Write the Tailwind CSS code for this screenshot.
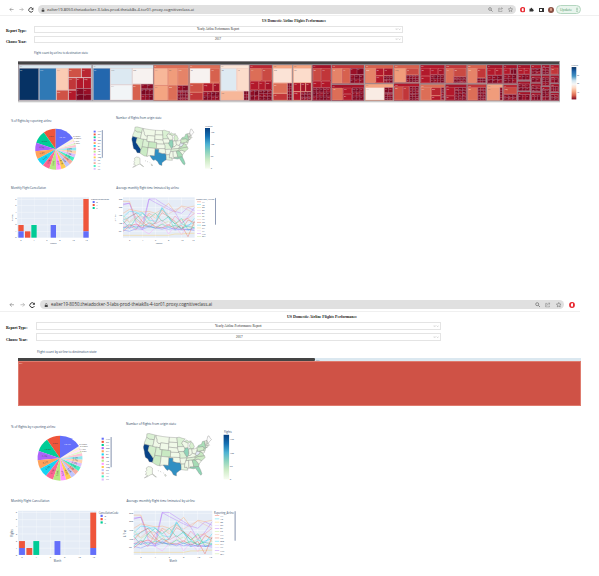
<!DOCTYPE html>
<html lang="en">
<head>
<meta charset="utf-8">
<title>US Domestic Airline Flights Performance</title>
<script src="https://cdn.jsdelivr.net/npm/@tailwindcss/browser@4"></script>
</head>
<body class="bg-white w-[599px] h-[576px] overflow-hidden font-['Open_Sans',sans-serif] text-[#2a3f5f]">
<svg class="absolute w-0 h-0">
  <symbol id="back" viewBox="0 0 12 12"><path d="M11 6H2M6 2L2 6l4 4" fill="none" stroke="#777" stroke-width="1.3"/></symbol>
  <symbol id="fwd" viewBox="0 0 12 12"><path d="M1 6h9M6 2l4 4-4 4" fill="none" stroke="#999" stroke-width="1.3"/></symbol>
  <symbol id="reload" viewBox="0 0 12 12"><path d="M10 7.5A4.4 4.4 0 1 1 9.300 3" fill="none" stroke="#333" stroke-width="1.8"/><path d="M10.800 .8v4.500H6.300z" fill="#333"/></symbol>
  <symbol id="lock" viewBox="0 0 12 12"><rect x="2" y="5" width="8" height="6.500" rx="1" fill="#444"/><path d="M3.800 5V3.500a2.200 2.200 0 0 1 4.400 0V5" fill="none" stroke="#444" stroke-width="1.400"/></symbol>
  <symbol id="search" viewBox="0 0 12 12"><circle cx="4.800" cy="4.800" r="3.300" fill="none" stroke="#666" stroke-width="1.400"/><path d="M7.300 7.300L11 11" stroke="#666" stroke-width="1.600"/></symbol>
  <symbol id="share" viewBox="0 0 12 12"><path d="M5 3H1.500v8h8V8M4 8c.3-3 2-4.500 6-4.500M8 1l3 2.500L8 6" fill="none" stroke="#777" stroke-width="1.100"/></symbol>
  <symbol id="star" viewBox="0 0 12 12"><path d="M6 1l1.500 3.400 3.700.4-2.800 2.500.8 3.700L6 9.100 2.800 11l.8-3.700L.8 4.800l3.700-.4z" fill="none" stroke="#666" stroke-width="1.100"/></symbol>
  <symbol id="stop" viewBox="0 0 12 12"><circle cx="6" cy="6" r="5.800" fill="#e8252d"/><path d="M4 3.500h1v-1h1v-.5h1v1h1V8L7 9.500H5L3.700 7z" fill="#fff"/></symbol>
  <symbol id="puzzle" viewBox="0 0 12 12"><path d="M1 4h3a1.700 1.700 0 1 1 3.300 0H10v2.500a1.500 1.500 0 1 1 0 3V11H1V8.500a1.500 1.500 0 0 0 0-2.500z" fill="#333"/></symbol>
</svg>

<section class="h-[292px] flex flex-col">
  <div class="h-[16px] pt-[4.500px] flex items-center border-b border-[#f0f0f0]">
    <svg class="ml-[8.500px] w-[5px] h-[5px]"><use href="#back"/></svg>
    <svg class="ml-[5px] w-[5px] h-[5px]"><use href="#fwd"/></svg>
    <svg class="ml-[4px] w-[6px] h-[6px]"><use href="#reload"/></svg>
    <div class="ml-[4px] w-[478px] h-[9px] rounded-full bg-[#e0e0e0] flex items-center">
      <svg class="ml-[3px] w-[4px] h-[4px]"><use href="#lock"/></svg>
      <svg class="ml-[2.500px] w-[147px] h-[5px] overflow-visible" fill="#333"><text y="3.900" font-size="4.200" textLength="147" lengthAdjust="spacingAndGlyphs">ealter19-8050.theiadocker-3-labs-prod-theiak8s-4-tor01.proxy.cognitiveclass.ai</text></svg>
      <svg class="ml-auto w-[5px] h-[5px]"><use href="#search"/></svg>
      <svg class="ml-[5px] w-[5px] h-[5px]"><use href="#share"/></svg>
      <svg class="ml-[4.500px] mr-[3px] w-[5px] h-[5px]"><use href="#star"/></svg>
    </div>
    <svg class="ml-[4px] w-[5.500px] h-[5.500px]"><use href="#stop"/></svg>
    <svg class="ml-[4px] w-[5px] h-[5px]"><use href="#puzzle"/></svg>
    <div class="ml-[5px] w-[4.500px] h-[4.500px] border border-r-2 border-[#333]"></div>
    <div class="ml-[4.500px] w-[5.500px] h-[6px] rounded-full bg-[#8a5144] flex justify-center items-center"><div class="w-[2.500px] h-[3px] rounded-full bg-[#dfa28d]"></div></div>
    <div class="ml-[2px] w-[25px] h-[9px] rounded-full border border-[#b4d6c0] bg-[#e9f5ed] flex items-center">
      <svg class="ml-[3px] w-[20px] h-[5px] overflow-visible" fill="#4e9567"><text y="4" font-size="4" textLength="12" lengthAdjust="spacingAndGlyphs">Update</text><path d="M17 .8v.9M17 2.300v.9M17 3.800v.9" stroke="#4e9567" stroke-width=".9"/></svg>
    </div>
  </div>
  <h1 class="mt-[2px] h-[5px] flex items-center pl-[262px] font-['Liberation_Serif',serif] font-bold"><svg class="w-[64px] h-[5px] overflow-visible" fill="#222"><text y="3.800" font-size="4.300" textLength="64" lengthAdjust="spacingAndGlyphs">US Domestic Airline Flights Performance</text></svg></h1>
  <div class="mt-[2.500px] h-[7px] flex items-center font-['Liberation_Serif',serif]">
    <div class="w-[34px] pl-[5.500px] font-bold shrink-0"><svg class="w-[21px] h-[5px] overflow-visible" fill="#000"><text y="5" font-size="4.600" textLength="20.500" lengthAdjust="spacingAndGlyphs">Report Type:</text></svg></div>
    <div class="w-[369px] h-[7px] border border-[#e4e4e4] flex items-center"><svg class="ml-[162px] w-[42px] h-[4px] overflow-visible" fill="#222"><text y="2.900" font-size="3.400" textLength="42" lengthAdjust="spacingAndGlyphs">Yearly Airline Performance Report</text></svg><svg class="ml-auto mr-[1px] w-[6px] h-[4px]"><path d="M1 1.500l1.200 1.200M2.200 1.500l-1.200 1.200M3.700 1.600l1 1 1-1" fill="none" stroke="#aaa" stroke-width=".5"/></svg></div>
  </div>
  <div class="mt-[3px] h-[7px] flex items-center font-['Liberation_Serif',serif]">
    <div class="w-[34px] pl-[5.500px] font-bold shrink-0"><svg class="w-[21px] h-[5px] overflow-visible" fill="#000"><text y="5.500" font-size="4.600" textLength="20.500" lengthAdjust="spacingAndGlyphs">Choose Year:</text></svg></div>
    <div class="w-[369px] h-[7px] border border-[#e4e4e4] flex items-center"><svg class="ml-[180px] w-[6px] h-[4px] overflow-visible" fill="#222"><text y="2.900" font-size="3.400" textLength="6" lengthAdjust="spacingAndGlyphs">2017</text></svg><svg class="ml-auto mr-[1px] w-[6px] h-[4px]"><path d="M1 1.500l1.200 1.200M2.200 1.500l-1.200 1.200M3.700 1.600l1 1 1-1" fill="none" stroke="#aaa" stroke-width=".5"/></svg></div>
  </div>
  <div class="mt-[7.500px] h-[5px] pl-[34px] flex items-center"><svg class="w-[54px] h-[5px] overflow-visible" fill="#2a3f5f"><text y="3.600" font-size="3.100" textLength="54" lengthAdjust="spacingAndGlyphs">Flight count by airline to destination state</text></svg></div>
  <div class="mt-[6px] ml-[18px] h-[49px] flex">
    <svg id="tree" class="w-[542px] h-[42px] shrink-0" viewBox="54 15 1626 126"></svg>
    <svg class="w-[30px] h-[42px] ml-[11px]" viewBox="0 0 90 126">
      <defs><linearGradient id="rdbu" x1="0" y1="0" x2="0" y2="1"><stop offset="0" stop-color="#053061"/><stop offset=".13" stop-color="#2166ac"/><stop offset=".28" stop-color="#4393c3"/><stop offset=".42" stop-color="#d1e5f0"/><stop offset=".53" stop-color="#f7f7f7"/><stop offset=".64" stop-color="#fddbc7"/><stop offset=".76" stop-color="#f4a582"/><stop offset=".88" stop-color="#d6604d"/><stop offset="1" stop-color="#7d0923"/></linearGradient></defs>
      <rect x="2" y="15" width="15" height="104" fill="url(#rdbu)"/>
      <g font-size="7" fill="#2a3f5f"><text x="2" y="11" textLength="21" lengthAdjust="spacingAndGlyphs">Flights</text><text x="19" y="43" font-size="6">30</text><text x="19" y="70" font-size="6">20</text><text x="19" y="97" font-size="6">10</text></g>
    </svg>
  </div>
  <svg data-charts class="w-[230px] h-[145px]" viewBox="0 330 690 435"></svg>
</section>

<section class="h-[284px] flex flex-col">
  <div class="w-[580px] h-[20px] pt-[6.500px] flex items-center border-b border-[#f0f0f0] overflow-hidden">
    <svg class="ml-[8.500px] w-[5.500px] h-[5.500px] shrink-0"><use href="#back"/></svg>
    <svg class="ml-[5.500px] w-[5.500px] h-[5.500px] shrink-0"><use href="#fwd"/></svg>
    <svg class="ml-[4px] w-[6.500px] h-[6.500px] shrink-0"><use href="#reload"/></svg>
    <div class="ml-[4.500px] w-[524px] h-[9px] rounded-full bg-[#e0e0e0] flex items-center shrink-0">
      <svg class="ml-[3.500px] w-[4.500px] h-[4.500px]"><use href="#lock"/></svg>
      <svg class="ml-[3px] w-[161px] h-[5px] overflow-visible" fill="#333"><text y="4.100" font-size="4.600" textLength="161" lengthAdjust="spacingAndGlyphs">ealter19-8050.theiadocker-3-labs-prod-theiak8s-4-tor01.proxy.cognitiveclass.ai</text></svg>
      <svg class="ml-auto w-[5.500px] h-[5.500px]"><use href="#search"/></svg>
      <svg class="ml-[5px] w-[5.500px] h-[5.500px]"><use href="#share"/></svg>
      <svg class="ml-[5px] mr-[3px] w-[5.500px] h-[5.500px]"><use href="#star"/></svg>
    </div>
    <svg class="ml-[4.500px] w-[6px] h-[6px] shrink-0"><use href="#stop"/></svg>
    <svg class="ml-[5px] w-[5px] h-[5px] shrink-0"><use href="#puzzle"/></svg>
  </div>
  <h1 class="mt-[2px] h-[5px] flex items-center pl-[286.500px] font-['Liberation_Serif',serif] font-bold"><svg class="w-[70px] h-[5px] overflow-visible" fill="#222"><text y="3.800" font-size="4.600" textLength="70" lengthAdjust="spacingAndGlyphs">US Domestic Airline Flights Performance</text></svg></h1>
  <div class="mt-[3px] h-[8px] flex items-center font-['Liberation_Serif',serif]">
    <div class="w-[36px] pl-[5.500px] font-bold shrink-0"><svg class="w-[21px] h-[5px] overflow-visible" fill="#000"><text y="5.200" font-size="4.900" textLength="21.500" lengthAdjust="spacingAndGlyphs">Report Type:</text></svg></div>
    <div class="w-[405px] h-[8px] border border-[#e4e4e4] flex items-center"><svg class="ml-[178px] w-[46.500px] h-[4px] overflow-visible" fill="#222"><text y="2.900" font-size="3.700" textLength="46.500" lengthAdjust="spacingAndGlyphs">Yearly Airline Performance Report</text></svg><svg class="ml-auto mr-[1px] w-[6px] h-[4px]"><path d="M1 1.500l1.200 1.200M2.200 1.500l-1.200 1.200M3.700 1.600l1 1 1-1" fill="none" stroke="#aaa" stroke-width=".5"/></svg></div>
  </div>
  <div class="mt-[3px] h-[8px] flex items-center font-['Liberation_Serif',serif]">
    <div class="w-[36px] pl-[5.500px] font-bold shrink-0"><svg class="w-[21px] h-[5px] overflow-visible" fill="#000"><text y="5.500" font-size="4.900" textLength="21.500" lengthAdjust="spacingAndGlyphs">Choose Year:</text></svg></div>
    <div class="w-[405px] h-[8px] border border-[#e4e4e4] flex items-center"><svg class="ml-[198.500px] w-[6.500px] h-[4px] overflow-visible" fill="#222"><text y="2.900" font-size="3.700" textLength="6.500" lengthAdjust="spacingAndGlyphs">2017</text></svg><svg class="ml-auto mr-[1px] w-[6px] h-[4px]"><path d="M1 1.500l1.200 1.200M2.200 1.500l-1.200 1.200M3.700 1.600l1 1 1-1" fill="none" stroke="#aaa" stroke-width=".5"/></svg></div>
  </div>
  <div class="mt-[8px] h-[5px] pl-[36.500px] flex items-center"><svg class="w-[59.500px] h-[5px] overflow-visible" fill="#2a3f5f"><text y="3.600" font-size="3.400" textLength="59.500" lengthAdjust="spacingAndGlyphs">Flight count by airline to destination state</text></svg></div>
  <div class="mt-[4px] ml-[18px] w-[562.500px] h-[48px]">
    <div class="h-[3px] bg-[#dbe8f0] flex items-center"><div class="w-[297px] h-[3px] bg-[#444] rounded-r-[1px]"></div><svg class="ml-px w-[4px] h-[3px]"><text y="2.500" font-size="2.500" fill="#789">GU</text></svg></div>
    <div class="h-[45px] bg-[#cf5246] border border-[#df7b6e]"><svg class="w-[6px] h-[4px]"><text x=".3" y="2.200" font-size="2.300" fill="#fff">UA</text></svg></div>
  </div>
  <svg data-charts class="mt-[9px] w-[252px] h-[159px] -ml-px shrink-0" viewBox="0 330 690 435"></svg>
</section>

<script>
const rect = (x, y, w, h, f, extra = '') => `<rect x="${x}" y="${y}" width="${w}" height="${h}" fill="${f}" ${extra}/>`;
const text = (x, y, s, size, len, extra = '') => `<text x="${x}" y="${y}" font-size="${size}" ${len ? `textLength="${len}" lengthAdjust="spacingAndGlyphs"` : ''} ${extra}>${s}</text>`;

// ---- treemap ----
const codes = ['AA','DL','WN','UA','OO','B6','AS','NK','EV','MQ','F9','YX','9E','OH'];
const darks = ['#8f0c25','#840a24','#7a0722','#990f27','#800923'];
// g: [x0,y0,x1,y1,header,label,cells]; cell: [x0,y0,x1,y1,colour] or [x0,y0,x1,y1,cols,rows]
const A='#b2182b',B='#c13639',C='#cf5246',D='#dc6e57',E='#e58368',F='#f09c7b',K='#a51429';
const sh = (o, c) => c.map(v => [v[0]+o, v[1], v[2]+o, ...v.slice(3)]);
const G = [
 [57,27,275,134,'#dbe8f0','CA',sh(30,[[28,37,86,132,'#063264'],[88,37,138,132,'#2f79b5'],[140,37,174,102,'#fbccb4'],[140,103,174,132,C],[176,37,213,64,C],[215,37,243,64,'#b92732'],[176,66,198,101,B],[199,66,220,98,A],[221,66,243,98,A],[176,103,198,132,A],[199,98,243,132,2,2]])],
 [278,27,460,134,'#dbe8f0','TX',sh(30,[[250,37,300,132,'#2367ae'],[302,37,366,85,'#dce9f2'],[302,87,366,132,'#f2f5f7'],[368,37,429,83,'#f7f2f0'],[368,85,392,132,'#d7614e'],[394,85,429,98,2,1],[394,100,429,132,3,2]])],
 [461,27,566,134,D,'IL',sh(30,[[433,37,473,87,'#f7b799'],[475,37,502,87,F],[504,37,534,87,E],[433,89,473,132,'#f4a582'],[475,89,501,132,D],[503,89,534,104,2,1],[503,106,534,132,4,3]])],
 [568,27,660,134,D,'FL',[[570,37,630,81,'#f7f2f0'],[632,37,658,78,'#d7614e'],[570,83,608,108,C],[570,110,608,132,B],[610,82,638,106,A],[640,82,658,106,K],[610,108,658,132,4,2]]],
 [661,27,747,134,'#fbe5d8','GA',sh(615,[[48,37,94,104,'#deeaf2'],[96,37,130,104,'#fcdccb'],[48,106,115,132,'#f7b799'],[117,106,130,132,2,3]])],
 [749,27,816,134,'#b92732','NY',sh(615,[[136,37,170,74,D],[172,37,200,74,'#c94a43'],[136,76,160,101,A],[162,76,180,101,A],[182,76,200,101,K],[136,103,160,132,2,2],[162,103,200,132,3,3]])],
 [818,27,877,134,'#f4a582','CO',sh(615,[[205,37,260,80,'#fbe3d6'],[205,82,246,111,D],[205,113,246,132,B],[248,82,260,132,2,6]])],
 [879,27,935,134,'#f4a582','NC',sh(615,[[266,37,318,79,'#fcdccb'],[266,81,286,106,A],[288,81,301,106,K],[303,81,318,106,K],[266,108,286,132,A],[288,108,318,132,3,3]])],
 [937,27,993,134,K,'VA',sh(615,[[324,37,348,74,'#c94a43'],[350,37,376,74,B],[324,76,348,94,A],[350,76,376,94,A],[324,96,376,132,5,3]])],
 [995,27,1092,83,B,'AZ',sh(615,[[382,37,411,81,E],[413,37,434,81,'#d7614e'],[436,37,476,55,2,1],[436,57,476,81,3,2]])],
 [995,86,1092,134,K,'PA',sh(615,[[382,96,413,132,D],[415,96,440,113,A],[415,115,440,132,A],[442,96,476,132,3,3]])],
 [1095,27,1180,82,'#d7614e','MI',sh(615,[[482,37,511,80,E],[513,37,535,58,A],[537,37,563,58,K],[513,60,535,80,A],[537,60,563,80,3,2]])],
 [1095,84,1180,134,'#f4a582','NV',sh(615,[[482,95,537,132,'#f9ece4'],[539,95,563,110,2,1],[539,112,563,132,3,2]])],
 [1182,27,1258,80,'#d7614e','WA',[[1184,37,1217,78,F],[1219,37,1256,56,'#c94a43'],[1219,58,1256,78,4,2]]],
 [1182,82,1258,134,A,'MN',[[1184,92,1207,132,C],[1209,92,1227,132,B],[1229,92,1256,132,3,4]]],
 [1261,27,1334,82,A,'OH',sh(1200,[[63,37,90,59,A],[92,37,113,55,A],[115,37,132,55,K],[63,61,90,80,A],[92,57,132,80,4,2]])],
 [1261,85,1334,134,D,'MA',sh(1200,[[63,95,92,132,D],[94,95,122,118,'#b92732'],[94,120,122,132,A],[124,95,132,132,1,5]])],
 [1336,27,1400,82,B,'MO',sh(1200,[[138,37,160,80,D],[162,37,198,61,'#c94a43'],[162,63,198,80,4,2]])],
 [1336,85,1400,134,K,'TN',sh(1200,[[138,95,163,118,A],[138,120,163,132,K],[165,95,198,132,3,4]])],
 [1402,27,1459,82,'#d7614e','OR',sh(1200,[[204,37,230,80,E],[232,37,257,65,B],[232,67,257,80,3,2]])],
 [1402,85,1459,134,B,'MD',sh(1200,[[204,95,232,132,D],[234,95,257,132,3,4]])],
 [1461,27,1508,83,K,'LA',sh(1200,[[263,37,284,57,A],[286,37,306,57,A],[263,59,306,81,3,2]])],
 [1461,85,1508,134,'#f4a582','UT',sh(1200,[[263,95,298,132,F],[300,95,307,132,1,5]])],
 [1510,27,1551,83,K,'NJ',sh(1200,[[312,37,330,54,A],[332,37,349,54,2,1],[312,56,349,81,3,2]])],
 [1510,86,1551,134,'#b92732','HI',sh(1200,[[312,95,349,114,'#c94a43'],[312,116,349,132,3,2]])],
 [1553,27,1591,73,K,'WI',sh(1200,[[355,37,372,54,A],[374,37,389,54,A],[355,56,389,71,3,1]])],
 [1553,76,1591,106,K,'KY',sh(1200,[[355,84,389,104,3,2]])],[1553,108,1591,134,K,'IN',sh(1200,[[355,116,389,132,3,1]])],
 [1593,27,1623,56,A,'SC',sh(1200,[[395,37,421,54,2,2]])],[1593,58,1623,80,K,'OK',sh(1200,[[395,66,421,78,2,1]])],[1593,82,1623,107,K,'AL',sh(1200,[[395,90,421,105,2,2]])],[1593,109,1623,134,K,'NE',sh(1200,[[395,117,421,132,3,1]])],
 [1625,27,1649,56,K,'AR',sh(1200,[[427,35,447,54,2,2]])],[1625,58,1649,90,K,'IA',sh(1200,[[427,66,447,88,2,2]])],[1625,92,1649,134,K,'ID',sh(1200,[[427,100,447,132,2,3]])],
 [1651,27,1677,56,A,'AK',sh(1200,[[453,36,474,54,B]])],[1651,58,1677,82,K,'NM',sh(1200,[[453,66,474,80,2,1]])],[1651,84,1677,108,K,'MT',sh(1200,[[453,92,474,106,3,2]])],[1651,110,1677,134,K,'ND',sh(1200,[[453,116,474,132,2,2]])]
];
let t = rect(54,15,1626,122,'#a9a3a8') + rect(54,17,1623,8,'#454545') + rect(54,136,1626,3,'#c9c9c9'), n = 0;
for (const g of G) {
  t += rect(g[0], g[1], g[2]-g[0], g[3]-g[1], g[4], 'stroke="#8d7f87" stroke-width="1"');
  t += text(g[0]+3, g[1]+7, g[5], 5, 0, `fill="${/^#(db|f)/.test(g[4]) ? '#765' : '#fff'}" opacity=".8"`);
  for (const c of g[6]) {
    const [x,y,X,Y,p,q] = c;
    if (q) {
      t += rect(x-1, y-1, X-x+2, Y-y+2, '#b07686');
      const w = (X-x)/p, h = (Y-y)/q;
      for (let i=0;i<p;i++) for (let j=0;j<q;j++) { n++; t += rect(x+i*w+.6, y+j*h+.6, w-1.2, h-1.2, darks[n%5]) + (w>7&&h>7 ? text(x+i*w+1.5, y+j*h+6, codes[n%14], 4, 0, 'fill="#fff" opacity=".6"') : ''); }
    } else {
      n++;
      t += rect(x, y, X-x, Y-y, p, 'stroke="#e8b0a8" stroke-width="1" stroke-opacity=".7"') + text(x+2, y+7, codes[n%14], 5.5, 0, `fill="${/^#(f|de|dce)/.test(p) ? '#655' : '#fff'}" opacity=".85"`);
    }
  }
}
document.getElementById('tree').innerHTML = t;

// ---- charts ----
// state borders as west longitude, latitude
const S = {
WA:'124.7,48.4 122.8,49 117,49 117,46 119,46 121,45.7 123.2,46.2 124,46.3',
OR:'124,46.3 123.2,46.2 121,45.7 119,46 117,46 117,44.2 117,42 124.2,42 124.5,43',
CA:'124.2,42 120,42 120,39 114.6,35 114.7,32.7 117.1,32.5 118.5,34 120.6,34.6 122,36.8 122.5,37.8 123.8,39.5 124.3,40.4',
NV:'120,42 114,42 114,36.2 114.6,35 120,39',
ID:'117,49 116,49 116,48 114.5,46.5 114.3,45.5 113,44.5 111,44.5 111,42 117,42 117,46',
MT:'116,49 110,49 104,49 104,45 111,45 111,44.5 113,44.5 114.3,45.5 114.5,46.5 116,48',
WY:'111,45 104,45 104,41 111,41', UT:'114,42 111,42 111,41 109,41 109,37 114,37', CO:'109,41 102,41 102,37 109,37',
AZ:'114,37 109,37 109,31.3 111,31.3 114.7,32.5 114.6,35 114,36.2',
NM:'109,37 103,37 103,32 106.6,32 106.6,31.8 108.2,31.8 108.2,31.3 109,31.3',
ND:'104,49 97.2,49 96.6,46 104,46', SD:'104,46 96.6,46 96.4,43 98,42.8 104,43',
NE:'104,43 98,42.8 96.4,42.5 95.8,41 95.3,40 102,40 102,41 104,41', KS:'102,40 95.3,40 94.6,39 94.6,37 102,37',
OK:'103,37 94.6,37 94.4,35.5 94.5,33.7 97,33.8 100,34.5 100,36.5 103,36.5',
TX:'103,36.5 100,36.5 100,34.5 97,33.8 94.5,33.7 94,33 93.8,31 93.9,29.7 95,29.2 97.2,27.7 97.2,25.9 99.2,26.5 100.5,28.5 102.5,29.7 103.2,29 104.5,29.6 106.6,31.8 106.6,32 103,32',
MN:'97.2,49 95.2,49.3 92,48.5 89.6,48 92,46.7 92.8,45.5 91.2,43.5 96.5,43.5 96.6,46',
IA:'96.5,43.5 91.2,43.5 90.2,42 91.2,40.6 95.8,40.6 96.4,42.5',
MO:'95.8,40.6 91.5,40.5 90.5,38.8 89.2,37 89.7,36 90.3,36.5 94.6,36.5 94.6,39',
AR:'94.6,36.5 90.3,36.5 89.7,36 91.2,33 94,33 94.4,35.5',
LA:'94,33 91.2,33 91.5,31 89.7,31 89.2,29.2 91,29.3 93.9,29.7 93.8,31',
WI:'92,46.7 90.5,46.6 88,45.8 87.5,44.8 87.8,42.5 90.6,42.5 91.2,43.5 92.8,45.5',
IL:'90.6,42.5 87.8,42.5 87.5,41.7 87.5,39.3 88.1,37.8 89.2,37 90.5,38.8 91.5,40.5 90.2,42',
MI:'86.8,41.8 84.8,41.7 83.4,41.8 82.5,43 83,44 83.4,45.2 84.8,45.8 85.6,45 86.5,43.8 86.2,42.5',
UP:'90.5,46.6 88.4,47.3 87,46.5 84.5,46.5 84.8,46 87.5,45.3 88,45.8',
IN:'87.5,41.7 84.8,41.7 84.8,39.1 86.3,38 88.1,37.8 87.5,39.3',
OH:'84.8,41.7 83,41.5 80.5,42 80.5,40.6 82,38.6 83.5,38.6 84.8,39.1',
KY:'89.2,37 88.1,37.8 86.3,38 84.8,39.1 83.5,38.6 82.5,38.2 82,37.5 83.6,36.6 89.3,36.5',
TN:'89.3,36.5 83.6,36.6 81.7,36.6 84.3,35 90.2,35', MS:'90.2,35 88.2,35 88.4,30.3 89.7,30.3 89.7,31 91.5,31 91.2,33',
AL:'88.2,35 85.6,35 85,32.5 85,31 87.6,31 87.5,30.3 88.4,30.3', GA:'85.6,35 83.1,35 81,32 81.4,30.7 84.9,30.7 85,32.5',
FL:'87.6,31 84.9,30.7 81.4,30.7 80.5,28.2 80.1,26 80.8,25.2 81.8,26.2 82.7,28 83.8,29.9 85.3,29.7 87.5,30.3',
SC:'83.1,35 81,35.1 78.6,33.9 81,32', NC:'84.3,35 81.7,36.6 76,36.5 75.6,35.3 77.5,34.4 78.6,33.9 81,35.1 83.1,35',
VA:'83.6,36.6 82,37.5 80.3,37.6 78.3,39.3 77,38.5 76.3,37 76,36.5', WV:'82.5,38.2 80.6,40.6 80.5,39.7 78.3,39.4 80.3,37.6 82,37.5',
MD:'79.5,39.7 75.6,39.8 75.1,38.5 76,38 77,38.5 78.3,39.4', PA:'80.5,42 79.8,42.3 75.3,42 74.8,40.5 75.6,39.8 80.5,39.7',
NJ:'75,41.3 74,40.9 74.2,39.6 75,39 75.6,39.8 74.8,40.5',
NY:'79.8,42.3 79,43.2 76.3,43.5 75,45 73.3,45 73.4,41 72,41 74.2,40.6 75.3,42',
VT:'73.3,45 71.5,45 72.5,42.7 73.3,42.7', NH:'71.5,45 71,45.2 70.7,43 72.5,42.7',
ME:'71,45.2 70.2,46.3 69.2,47.4 68.2,47.3 67.8,45.7 67,44.8 69,44 70.7,43', MA:'73.3,42.7 70.7,42.9 70,41.8 73.5,42.05', CT:'73.5,42.05 71.2,42 71.2,41.4 73.5,41.1'
};
const tone = {CA:'#084387',TX:'#2f8fc3',IL:'#8fd3b8',FL:'#8fd5b5',GA:'#a6dcb5',NY:'#aadfb8',CO:'#c8e9c2',AZ:'#cbebc5',NV:'#d3eecc',WA:'#dbf1d4',MN:'#daf1d3',MI:'#d8f0d0',UP:'#d8f0d0',VA:'#c8e9c2',NC:'#cdebc5',NJ:'#cdebc5',PA:'#d0edc9',UT:'#daf1d3',OR:'#e2f4dc',MO:'#def2d7',TN:'#def2d7',LA:'#e5f5df',WV:'#e4ebf6',ME:'#fbfbfb'};
// Albers equal-area conic
const R = Math.PI/180, p1 = 29.5*R, p2 = 45.5*R, nn = (Math.sin(p1)+Math.sin(p2))/2, cc = Math.cos(p1)**2 + 2*nn*Math.sin(p1);
const rho = l => Math.sqrt(cc - 2*nn*Math.sin(l*R))/nn;
const proj = s => s.split(' ').map(q => { const [lo,la] = q.split(',').map(Number), th = nn*(96-lo)*R, r = rho(la); return (490.6+259*r*Math.sin(th)).toFixed(1)+','+(444-259*(rho(37.5)-r*Math.cos(th))).toFixed(1); }).join(' ');
let m = '<g stroke="#777" stroke-width=".9" stroke-linejoin="round">';
for (const k in S) m += `<polygon points="${proj(S[k])}" fill="${tone[k]||'#f0f9e8'}"/>`;
m += '<path d="M403 475l6-4 7 1 4 3v16l6 4 5 5-5-2-6-6-6 2-8 5-8 3 9-6-6-3 3-5-3-3 4-4z" fill="#f0f9e8"/><path d="M435 482l3 1M441 484l3 2M449 488l2 1M454 492l4 3-2 3-2-3z" fill="#f0f9e8"/></g>';

const pie = [['#EF553B',9.8],['#00cc96',10],['#ab63fa',6.700],['#FFA15A',6.300],['#19d3f3',6.500],['#FF6692',5.700],['#B6E880',5.500],['#FF97FF',4],['#FECB52',4],['#c1c5fd',3.600],['#f5ac9e',3.300],['#43efc3',3.100],['#dcc0fb',2.900],['#ffd3b2',2.700],['#8ee6f0',2.500],['#ffc4d4',2],['#e2f6cd',1.700],['#ffe4ff',1.500],['#fff1cd',1.200],['#f2f2ec',1]];
let a = 0, c = '';
const pt = (f, r) => [(167 - r*Math.sin(f*2*Math.PI)).toFixed(1), (448 - r*Math.cos(f*2*Math.PI)).toFixed(1)];
const slice = (f0, f1, col, lab) => {
  const mid = (f0+f1)/2, q = pt(mid, 42);
  // labels run along the radius except in the widest slices
  const rot = mid < .17 || mid > .9 ? 0 : mid < .5 ? 90 - mid*360 : 270 - mid*360;
  c += `<path d="M167 448L${pt(f0,61.5)}A61.500 61.500 0 0 0 ${pt(f1,61.5)}z" fill="${col}"/>`;
  if (f1-f0 > .022) c += `<text x="${q[0]}" y="${q[1]}" font-size="6.500" text-anchor="middle" dominant-baseline="middle" transform="rotate(${rot} ${q})" fill="${col=='#636efa'?'#fff':'#444'}">${lab}</text>`;
};
for (const [col, v] of pie) { slice(a, a+v/100, col, v.toFixed(1)+'%'); a += v/100; }
slice(a, 1, '#636efa', '16.4%');
['0.993%','0.786%','1.15%','1.53%'].forEach((s, i) => c += text(220+i%2*2, 411+i*7, s, 6.5, 0, 'fill="#555"'));
const names = ['WN','DL','AA','OO','UA','EV','B6','AS','NK','MQ','F9','HA','YX','VX'];
const cols = ['#636efa','#EF553B','#00cc96','#ab63fa','#FFA15A','#19d3f3','#FF6692','#B6E880','#FF97FF','#FECB52','#c1c5fd','#f5ac9e','#43efc3','#dcc0fb'];
names.forEach((s, i) => c += rect(281, 392+i*8.6, 6, 5.5, cols[i]) + text(293, 397+i*8.6, s, 6.5));
c += rect(305.5, 390, 3, 83, '#8f9bb5', 'rx="1.5"');
c += text(33, 365, '% of flights by reporting airline', 9, 122) + text(348, 356, 'Number of flights from origin state', 9, 137) + text(33, 568, 'Monthly Flight Cancellation', 9, 105) + text(349, 568, 'Average monthly flight time (minutes) by airline', 9, 188);
c += m + '<defs><linearGradient id="gnbu" x1="0" y1="0" x2="0" y2="1"><stop offset="0" stop-color="#084081"/><stop offset=".2" stop-color="#1470b2"/><stop offset=".4" stop-color="#4eb3d3"/><stop offset=".58" stop-color="#8ad2bf"/><stop offset=".78" stop-color="#ccebc5"/><stop offset="1" stop-color="#f7fcf0"/></linearGradient></defs>';
c += rect(615, 384, 15, 122, 'url(#gnbu)') + text(616, 380, 'Flights', 7, 21);
[['150',399],['100',436],['50',471],['0',508]].forEach(v => c += text(632, v[1], v[0], 6.500));
// bar chart
c += rect(52, 592, 215, 121, '#e5ecf6');
for (let i=0;i<=6;i++) c += (i ? rect(52, 713-i*19.3, 215, 1, '#fff') : '') + text(46, 715-i*19.3, i, 6.5);
for (let i=0;i<6;i++) c += rect(63+i*39, 592, 1, 121, '#f5f8fc') + text(61+i*39, 722, 2*i+2, 6.5);
[[55,675,19,'#EF553B'],[55,694,19,'#636efa'],[75,694,19,'#EF553B'],[94,675,38,'#00cc96'],[152,675,38,'#636efa'],[250,597,97,'#EF553B'],[250,694,19,'#636efa']].forEach(b => c += rect(b[0], b[1], 16, b[2], b[3]));
c += text(150, 732, 'Month', 7, 20) + text(38, 663, 'Flights', 7, 20, 'transform="rotate(-90 38 663)"') + text(273, 600, 'CancellationCode', 7, 54);
[['B','#636efa'],['A','#EF553B'],['C','#00cc96']].forEach((v, i) => c += rect(278, 603+i*9, 6, 6, v[1]) + text(289, 609+i*9, v[0], 6.5));
// line chart
c += rect(369, 592, 215, 121, '#e5ecf6');
[598,622,645,669,693].forEach((y, i) => c += rect(369, y, 215, 1, '#fff') + text(356, y+2, 250-i*50, 6.5));
for (let i=0;i<6;i++) c += (i<5 ? rect(388+i*39, 592, 1, 121, '#fff') : '') + text(387+i*39-(i>4?6:0), 722, 2*i+2, 6.5);
const L = [
['#ab63fa',[615,609,668,690,597,597,610,622,634,640,622,632]],['#ab63fa',[612,610,655,672,597,608,618,628,636,672,650,622]],['#FFA15A',[640,628,632,636,634,640,628,610,636,618,622,618]],
['#FFA15A',[604,604,662,674,640,655,630,650,672,660,655,676]],['#19d3f3',[660,652,640,638,660,664,622,655,672,686,675,668]],
['#19d3f3',[652,634,636,650,672,670,625,648,690,672,680,655]],['#EF553B',[672,650,640,666,682,668,638,650,664,690,660,668]],
['#FF6692',[682,675,690,655,645,672,660,678,648,668,655,640]],['#00cc96',[662,685,655,640,655,640,664,650,672,655,690,682]],
['#00cc96',[688,672,684,675,680,684,672,682,676,684,678,684]],['#636efa',[690,694,686,688,680,682,688,680,690,686,690,686]],
['#636efa',[682,684,678,684,676,686,682,688,684,690,688,692]],['#B6E880',[645,668,655,672,660,686,672,664,682,668,685,675]],
['#FF97FF',[668,680,672,690,702,682,668,702,678,704,676,690]],['#FECB52',[706,706,706,706,706,706,706,706,702,702,700,700]],
['#EF553B',[694,678,672,682,668,680,684,674,686,676,710,664]],['#f5a896',[655,665,648,652,640,648,632,642,630,620,630,640]]];
L.forEach(l => c += `<polyline points="${l[1].map((y, i) => (369+i*19.5).toFixed(1)+','+y).join(' ')}" fill="none" stroke="${l[0]}" stroke-width="2" opacity=".5"/>`);
c += text(467, 732, 'Month', 7, 20) + text(348, 664, 'AirTime', 7, 20, 'transform="rotate(-90 348 664)"') + text(589, 600, 'Reporting_Airline', 7, 54);
['AA','AS','B6','DL','EV','F9','HA','NK','OO','UA','VX','WN','OH'].forEach((s, i) => c += rect(591, 605+i*8.7, 12, 1.3, cols[(i*4+1)%14], 'opacity=".8"') + text(606, 608+i*8.7, s, 6.5));
c += rect(645, 593, 3, 81, '#8f9bb5', 'rx="1.5"');
document.querySelectorAll('[data-charts]').forEach(e => e.innerHTML = `<g fill="#2a3f5f">${c}</g>`);
</script>
</body>
</html>
